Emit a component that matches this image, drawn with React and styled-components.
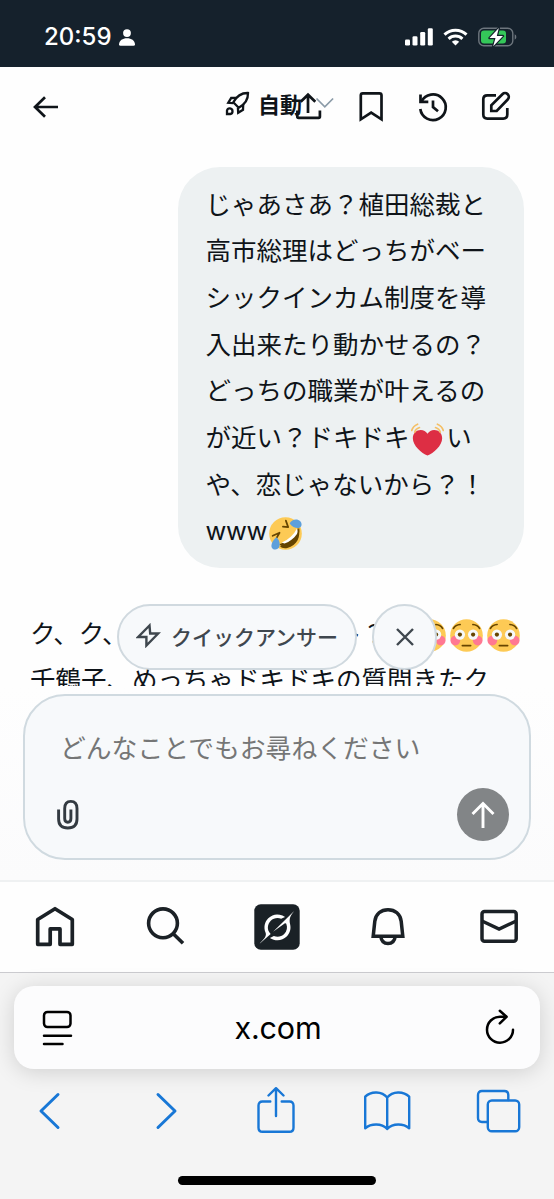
import React from "react";
import styled, { createGlobalStyle } from "styled-components";

const GlobalStyle = createGlobalStyle`
  * { box-sizing: border-box; }
  body {
    margin: 0;
    background: #fff;
    color: #0f1419;
    font-family: "Noto Sans CJK JP", sans-serif;
  }
  svg { display: block; flex: none; }
  button { border: 0; padding: 0; margin: 0; background: none; font: inherit; color: inherit; display: block; }
`;

const Phone = styled.div`
  width: 554px;
  height: 1199px;
  display: flex;
  flex-direction: column;
  overflow: hidden;
  background: #fefefe;
`;

const StatusBar = styled.header`
  flex: none;
  height: 67px;
  padding: 7px 37px 0 44px;
  display: flex;
  align-items: center;
  background: #15212c;
  color: #fff;
`;

const Clock = styled.span`
  font: 500 24px/30px Inter, sans-serif;
  width: 75px;
`;

const StatusIcons = styled.div`
  margin-left: auto;
  display: flex;
  align-items: center;
  gap: 10px;
`;

const AppHeader = styled.div`
  flex: none;
  height: 79px;
  padding: 0 41px 0 29px;
  display: flex;
  align-items: center;
`;

const ModeButton = styled.button`
  flex: none;
  display: flex;
  align-items: center;
  margin: -7px 0 0 162px;
`;

const ModeLabel = styled.span`
  margin: 0 13px 0 8px;
  padding-bottom: 1px;
  font-size: 22px;
  line-height: 32px;
  font-weight: 700;
  white-space: nowrap;
`;

const HeaderActions = styled.div`
  flex: none;
  display: flex;
  gap: 28.5px;
  margin-left: -44px;
`;

const Thread = styled.main`
  flex: none;
  position: relative;
  height: 540px;
  padding: 21px 30px 0;
  display: flex;
  flex-direction: column;
  overflow: hidden;
`;

const Bubble = styled.div`
  flex: none;
  align-self: flex-end;
  width: 346px;
  height: 401px;
  padding: 12.6px 27.5px;
  border-radius: 42px;
  background: #edf1f2;
`;

const Line = styled.div`
  display: flex;
  align-items: center;
  height: 46.7px;
  font-size: 25.5px;
  line-height: 46.7px;
  white-space: pre;
`;

const Latin = styled.span`
  padding-top: 4px;
  font-family: Inter, sans-serif;
  font-size: 25.5px;
  letter-spacing: -0.4px;
`;

const LineTail = styled.span`
  width: 75px;
  margin-left: 209px;
`;

const EmojiSvg = styled.svg`
  margin: 7px 1.9px 0;
`;

const Answer = styled.div`
  flex: none;
  margin-top: 40.5px;
`;

const FloatingChips = styled.div`
  position: absolute;
  left: 117px;
  bottom: 16px;
  display: flex;
  gap: 15px;
`;

const Chip = styled.button`
  width: ${(p) => p.$width};
  height: 66px;
  padding-bottom: ${(p) => p.$lift || "0"};
  display: flex;
  align-items: center;
  justify-content: center;
  gap: 10px;
  border: 2px solid #d0d9df;
  border-radius: 33px;
  background: #f7f9fb;
  color: #3f474e;
  font-size: 21px;
  line-height: 30px;
  font-weight: 500;
  white-space: nowrap;
`;

const ComposerArea = styled.section`
  flex: none;
  height: 194px;
  padding: 8px 23px 0;
  background: linear-gradient(#fefefe, #fbfbfc);
`;

const Composer = styled.div`
  height: 166px;
  padding: 33px 20px 17px 28px;
  display: flex;
  flex-direction: column;
  justify-content: space-between;
  border: 2px solid #d0dae0;
  border-radius: 42px;
  background: #f7f9fb;
`;

const Placeholder = styled.div`
  padding-left: 7px;
  color: #757676;
  font-size: 25.8px;
  line-height: 36px;
`;

const ComposerTools = styled.div`
  display: flex;
  align-items: center;
  justify-content: space-between;
`;

const SendButton = styled.button`
  width: 52px;
  height: 53px;
  display: grid;
  place-items: center;
  border-radius: 50%;
  background: #828587;
  color: #fff;
`;

const TabBar = styled.nav`
  flex: none;
  height: 92px;
  padding-bottom: 1px;
  display: grid;
  grid-template-columns: repeat(5, 1fr);
  place-items: center;
  border-top: 2px solid #eff1f2;
  background: #fefefe;
  color: #1b2126;
`;

const Browser = styled.footer`
  flex: none;
  height: 227px;
  padding: 13px 14px 0;
  display: flex;
  flex-direction: column;
  border-top: 1px solid #cbcbcf;
  background: #f4f4f4;
`;

const AddressBar = styled.div`
  height: 83px;
  padding: 0 24px 0 26px;
  display: flex;
  align-items: center;
  justify-content: space-between;
  border-radius: 20px;
  background: #fcfcfd;
  box-shadow: 0 3px 22px rgba(0, 0, 0, 0.15);
  color: #000;
`;

const Domain = styled.span`
  font: 400 30.5px/40px Inter, sans-serif;
  letter-spacing: -0.2px;
`;

const BrowserTools = styled.div`
  height: 84px;
  margin: 0 -14px;
  display: grid;
  grid-template-columns: repeat(5, 1fr);
  place-items: center;
  color: #1877d6;
`;

const HomeIndicator = styled.div`
  width: 198px;
  height: 9px;
  margin: 23px auto 0;
  border-radius: 5px;
  background: #000;
`;

function Icon({ size = 34, w, h, stroke = 2.7, round, children, color }) {
  const width = w || size;
  const height = h || size;
  return (
    <svg
      width={width}
      height={height}
      viewBox={`0 0 ${width} ${height}`}
      fill="none"
      stroke={color || "currentColor"}
      strokeWidth={stroke}
      strokeLinecap={round ? "round" : "butt"}
      strokeLinejoin={round ? "round" : "miter"}
      aria-hidden="true"
    >
      {children}
    </svg>
  );
}

const PersonIcon = () => (
  <svg width="16" height="17" viewBox="0 0 16 17" fill="currentColor">
    <circle cx="8" cy="4.1" r="3.9" />
    <path d="M0 15.2C.3 11.4 3.6 9.2 8 9.2s7.700 2.200 8 6q0 1.500-1.500 1.500h-13Q0 16.700 0 15.200z" />
  </svg>
);

const SignalIcon = () => (
  <svg width="28" height="18" viewBox="0 0 28 18" fill="currentColor">
    <rect x="0" y="11.500" width="5" height="6" rx="1.300" />
    <rect x="7.500" y="8.200" width="5" height="9.300" rx="1.300" />
    <rect x="15.200" y="4" width="5" height="13.500" rx="1.300" />
    <rect x="22.800" y="0.200" width="5" height="17.300" rx="1.300" />
  </svg>
);

const WifiIcon = () => (
  <svg width="25" height="18" viewBox="0 0 25 18" fill="none" stroke="currentColor" strokeWidth="3">
    <path d="M1.500 6.600a15.800 15.800 0 0 1 22 0" />
    <path d="M5.600 10.900a9.900 9.900 0 0 1 13.800 0" />
    <path d="M12.500 17.600l-3.700-3.900a5.300 5.300 0 0 1 7.400 0z" fill="currentColor" stroke="none" />
  </svg>
);

const BatteryIcon = () => (
  <svg width="39" height="20" viewBox="0 0 39 20" fill="none">
    <rect x=".8" y="1.200" width="34" height="17.600" rx="5" stroke="#6d757d" strokeWidth="1.400" />
    <path d="M36.700 7.300q1.700.8 1.700 2.700t-1.700 2.700z" fill="#6d757d" />
    <rect x="3" y="3.400" width="25" height="13.200" rx="3" fill="#34c759" />
    <path d="M20.800 1L11.500 11h6l-2.300 8.200L25 9h-6.200z" fill="#fff" stroke="#15212c" strokeWidth="2.400" paintOrder="stroke" strokeLinejoin="round" />
  </svg>
);

const BackIcon = () => (
  <Icon>
    <path d="M29 17H6.500M16 7.200L6 17l10 9.800" />
  </Icon>
);

const RocketIcon = () => (
  <Icon size={25} stroke={2.3}>
    <path d="M23 2C16 1.800 11.500 5.300 8.300 11.300l5.400 5.400C19.700 13.500 23.200 9 23 2z" />
    <path d="M11.500 6.800L6.200 7 3.300 11.800l5 .3M18.200 13.500l-.2 5.300-4.800 2.900-.3-5" />
    <path d="M2 23v-3.500a2.800 2.800 0 1 1 3.200 3.500z" />
  </Icon>
);

const ChevronDownIcon = () => (
  <Icon w={20} h={12} stroke={1.700} color="#8b9ba8">
    <path d="M1.500 1.500l8.300 8.300 8.300-8.300" />
  </Icon>
);

const ShareIcon = () => (
  <Icon>
    <path d="M17 23V5M9.700 11.800L17 4.700l7.300 7.100" />
    <path d="M6.300 20.500v6q0 1.300 1.300 1.300h20q1.300 0 1.300-1.300v-6" />
  </Icon>
);

const BookmarkIcon = () => (
  <Icon>
    <path d="M6.800 29.300V5.300q0-2 2-2h16.700q2 0 2 2v24l-10.350-6.700z" />
  </Icon>
);

const HistoryIcon = () => (
  <Icon>
    <path d="M5.500 11.600A12.800 12.800 0 1 1 4.300 19" />
    <path d="M4.500 4.500v7.300h7.800M17 10.500v6.600l5 4.200" />
  </Icon>
);

const ComposeIcon = () => (
  <Icon>
    <path d="M17 5.300H8.300q-4 0-4 4v15.300q0 4 4 4h16q4 0 4-4V18" />
    <path d="M12.300 21v-5.600L23.400 4.200a3.700 3.700 0 0 1 5.300 5.300L17.700 21z" />
  </Icon>
);

const BoltIcon = () => (
  <Icon size={25} stroke={2.400}>
    <path d="M13.500 2.500L2.200 14h8.200v8.500L22.200 10.500h-8z" />
  </Icon>
);

const CloseIcon = () => (
  <Icon size={20} stroke={2.400}>
    <path d="M2 2l16 16M18 2L2 18" />
  </Icon>
);

const ClipIcon = () => (
  <Icon w={32} h={32} stroke={2.900} color="#333a41">
    <path d="M5.600 10.500v9.500q0 9 9.200 9t9.200-9V9.600q0-7.200-6.200-7.200-6.100 0-6.100 7.200v10q0 3.700 3.100 3.700t3.100-3.700v-9" />
  </Icon>
);

const ArrowUpIcon = () => (
  <Icon w={26} h={28} stroke={2.900}>
    <path d="M13 27V2.500M2.500 13L13 2.500 23.500 13" />
  </Icon>
);

const HomeIcon = () => (
  <Icon size={46} stroke={3.700}>
    <path d="M23 4.700l17.300 10.800v24.800H28V24.900h-9.800v15.400H5.700V15.500z" strokeLinejoin="round" />
  </Icon>
);

const SearchIcon = () => (
  <Icon size={46} stroke={3.600}>
    <circle cx="20" cy="19.300" r="14.400" />
    <path d="M30 29.500l10 9.700" />
  </Icon>
);

const GrokIcon = () => (
  <svg width="46" height="46" viewBox="0 0 46 46">
    <rect x=".3" y=".3" width="45.400" height="45.400" rx="6.500" fill="#1a2126" />
    <g fill="#fff" transform="translate(5.600 6) scale(1.450 1.430)">
      <path d="M9.270 15.290l7.978-5.897c.391-.29.95-.177 1.137.272.980 2.369.542 5.215-1.410 7.169-1.951 1.954-4.667 2.382-7.149 1.406l-2.711 1.257c3.889 2.661 8.611 2.003 11.562-.953 2.341-2.344 3.066-5.539 2.388-8.420l.006.007c-.983-4.232.242-5.924 2.750-9.383l.179-.248-3.301 3.305v-.010z" />
      <path d="M7.623 16.723c-2.792-2.670-2.310-6.801.071-9.184 1.761-1.763 4.647-2.483 7.166-1.425l2.705-1.250a7.808 7.808 0 0 0-1.829-1A8.975 8.975 0 0 0 5.984 5.830c-2.533 2.536-3.330 6.436-1.962 9.764 1.022 2.487-.653 4.246-2.340 6.022-.599.630-1.199 1.259-1.682 1.925z" />
    </g>
  </svg>
);

const BellIcon = () => (
  <Icon size={46} stroke={3.500}>
    <path d="M8.200 32.300l1.600-15C10.600 10 16 5.700 23 5.700S35.400 10 36.200 17.300l1.600 15z" />
    <path d="M15.800 32.500q.9 7 7.200 7t7.200-7" />
  </Icon>
);

const MailIcon = () => (
  <Icon size={46} stroke={3.500}>
    <rect x="6" y="7.600" width="34.200" height="29.600" rx="2.500" />
    <path d="M6 17l17.100 8 17.100-8" />
  </Icon>
);

const ReaderIcon = () => (
  <Icon w={34} h={38} stroke={2.500} round>
    <rect x="4" y="2.900" width="26.500" height="15.200" rx="3.500" />
    <path d="M4 26.800h27M4 34.900h18.500" />
  </Icon>
);

const ReloadIcon = () => (
  <Icon w={34} h={38} stroke={2.500} round>
    <path d="M24.200 7.700H18A13 13 0 1 0 31 20.700" />
    <path d="M17.800 1.800l6.700 6-6.700 6.600" />
  </Icon>
);

const PrevIcon = () => (
  <Icon size={48} stroke={3} round>
    <path d="M27 7.500L10 24l17 16.500" />
  </Icon>
);

const NextIcon = () => (
  <Icon size={48} stroke={3} round>
    <path d="M16 7.500L33 24 16 40.500" />
  </Icon>
);

const ExportIcon = () => (
  <Icon size={48} stroke={2.400} round>
    <path d="M17.300 14.500H9.500q-4 0-4 4v22.300q0 4 4 4h27q4 0 4-4V18.500q0-4-4-4h-7.800" />
    <path d="M23 29V1.500M15.500 8.500L23 1.200l7.500 7.300" />
  </Icon>
);

const BookIcon = () => (
  <Icon size={48} stroke={2.400} round>
    <path d="M23.200 10.500C18 4 7 3.800 1.200 9.700v31.600c5.500-4.800 16.300-5.500 22 .7 5.700-6.200 16.500-5.500 22-.7V9.700C39.400 3.800 28.400 4 23.200 10.500V42" />
  </Icon>
);

const TabsIcon = () => (
  <Icon size={48} stroke={2.400} round>
    <path d="M12 35H7q-4 0-4-4V8q0-4 4-4h22.300q4 0 4 4v5" />
    <rect x="12.800" y="13.500" width="31.400" height="30.800" rx="4" />
  </Icon>
);

const HeartEmoji = () => (
  <EmojiSvg width="33" height="33" viewBox="0 0 36 36" role="img" aria-label="ドキドキするハート">
    <path d="M34 16.500c0-5-3.900-8.800-8.700-8.800-3 0-5.700 1.600-7.300 4-1.600-2.400-4.300-4-7.300-4C5.900 7.700 2 11.500 2 16.500 2 25 11.500 32.500 18 35.500 24.500 32.500 34 25 34 16.500z" fill="#dd2e44" />
    <path d="M.8 8.200Q2 3.400 7.200 1.300M4 10Q5 6.500 9.200 5M35.200 8.200Q34 3.400 28.800 1.300M32 10Q31 6.500 26.800 5" fill="none" stroke="#f4bf66" strokeWidth="1.800" strokeLinecap="round" />
  </EmojiSvg>
);

const RoflEmoji = () => (
  <EmojiSvg width="33" height="33" viewBox="0 0 36 36" role="img" aria-label="笑い転げる顔">
    <circle cx="18" cy="18" r="17.800" fill="#fdca55" />
    <path d="M31.800 11.500C35.500 21 30.500 31.500 20 33.700c-3.500.7-6.700 0-8-2.200C20 28 28 21 31.800 11.500z" fill="#664500" />
    <path d="M33 12c.5 3.300.2 5-.8 7-4.700 6.500-10.500 10.500-17.200 12.300-1.800-.1-3-.6-3.800-1.500C21 26.500 28 20.500 33 12z" fill="#664500" />
    <path d="M30.500 12.500c1 2.300.8 4.300 0 6-3.500 5-8 8.500-13.500 10.300-1.400 0-2.200-.3-3-.9C21.500 24.500 27 19.500 30.500 12.500z" fill="#fff" />
    <path d="M4 20.500l7.500-3.300-3 5.300M15.200 10.500l5.700.5-2.500-7" fill="none" stroke="#664500" strokeWidth="1.900" strokeLinecap="round" strokeLinejoin="round" />
    <path d="M22.500 7c2-3.500 6-5 9.500-3.700 3.300 1.300 4.500 5 2.700 7.300-2.500 3-8.700 1.200-12.200-3.600zM8 22c3.300 2.800 4.500 7.200 3.200 10.500-1.300 3.200-5 3.700-7.200 2-3-2.500-.8-8.500 4-12.500z" fill="#5d9fdb" />
  </EmojiSvg>
);

const FlushedEmoji = () => (
  <EmojiSvg width="33" height="33" viewBox="0 0 36 36" role="img" aria-label="赤面した顔">
    <circle cx="18" cy="18" r="17.800" fill="#fdca55" />
    <circle cx="5.800" cy="23.500" r="5.300" fill="#ff7892" />
    <circle cx="30.200" cy="23.500" r="5.300" fill="#ff7892" />
    <circle cx="10.800" cy="17" r="5.600" fill="#f5f8fa" />
    <circle cx="25.200" cy="17" r="5.600" fill="#f5f8fa" />
    <circle cx="10.800" cy="17" r="2.300" fill="#664500" />
    <circle cx="25.200" cy="17" r="2.300" fill="#664500" />
    <path d="M3.800 10.300Q6 6.400 11 6M32.200 10.300Q30 6.400 25 6M13.500 29h9" fill="none" stroke="#664500" strokeWidth="1.900" strokeLinecap="round" />
  </EmojiSvg>
);

const questionLines = [
  "じゃあさあ？植田総裁と",
  "高市総理はどっちがベー",
  "シックインカム制度を導",
  "入出来たり動かせるの？",
  "どっちの職業が叶えるの",
];

export default function App() {
  return (
    <Phone>
      <GlobalStyle />
      <StatusBar>
        <Clock>20:59</Clock>
        <PersonIcon />
        <StatusIcons>
          <SignalIcon />
          <WifiIcon />
          <BatteryIcon />
        </StatusIcons>
      </StatusBar>

      <AppHeader>
        <BackIcon />
        <ModeButton>
          <RocketIcon />
          <ModeLabel>自動</ModeLabel>
          <ChevronDownIcon />
        </ModeButton>
        <HeaderActions>
          <ShareIcon />
          <BookmarkIcon />
          <HistoryIcon />
          <ComposeIcon />
        </HeaderActions>
      </AppHeader>

      <Thread>
        <Bubble>
          {questionLines.map((line) => (
            <Line key={line}>{line}</Line>
          ))}
          <Line>
            が近い？ドキドキ
            <HeartEmoji />い
          </Line>
          <Line>や、恋じゃないから？！</Line>
          <Line>
            <Latin>www</Latin>
            <RoflEmoji />
          </Line>
        </Bubble>
        <Answer>
          <Line>
            ク、ク、
            <LineTail>ト？</LineTail>
            <FlushedEmoji />
            <FlushedEmoji />
            <FlushedEmoji />
          </Line>
          <Line>千鶴子、めっちゃドキドキの質問きたク</Line>
        </Answer>
        <FloatingChips>
          <Chip $width="240px" $lift="3px">
            <BoltIcon />
            クイックアンサー
          </Chip>
          <Chip $width="65px" aria-label="閉じる">
            <CloseIcon />
          </Chip>
        </FloatingChips>
      </Thread>

      <ComposerArea>
        <Composer>
          <Placeholder>どんなことでもお尋ねください</Placeholder>
          <ComposerTools>
            <ClipIcon />
            <SendButton aria-label="送信">
              <ArrowUpIcon />
            </SendButton>
          </ComposerTools>
        </Composer>
      </ComposerArea>

      <TabBar>
        <HomeIcon />
        <SearchIcon />
        <GrokIcon />
        <BellIcon />
        <MailIcon />
      </TabBar>

      <Browser>
        <AddressBar>
          <ReaderIcon />
          <Domain>x.com</Domain>
          <ReloadIcon />
        </AddressBar>
        <BrowserTools>
          <PrevIcon />
          <NextIcon />
          <ExportIcon />
          <BookIcon />
          <TabsIcon />
        </BrowserTools>
        <HomeIndicator />
      </Browser>
    </Phone>
  );
}
